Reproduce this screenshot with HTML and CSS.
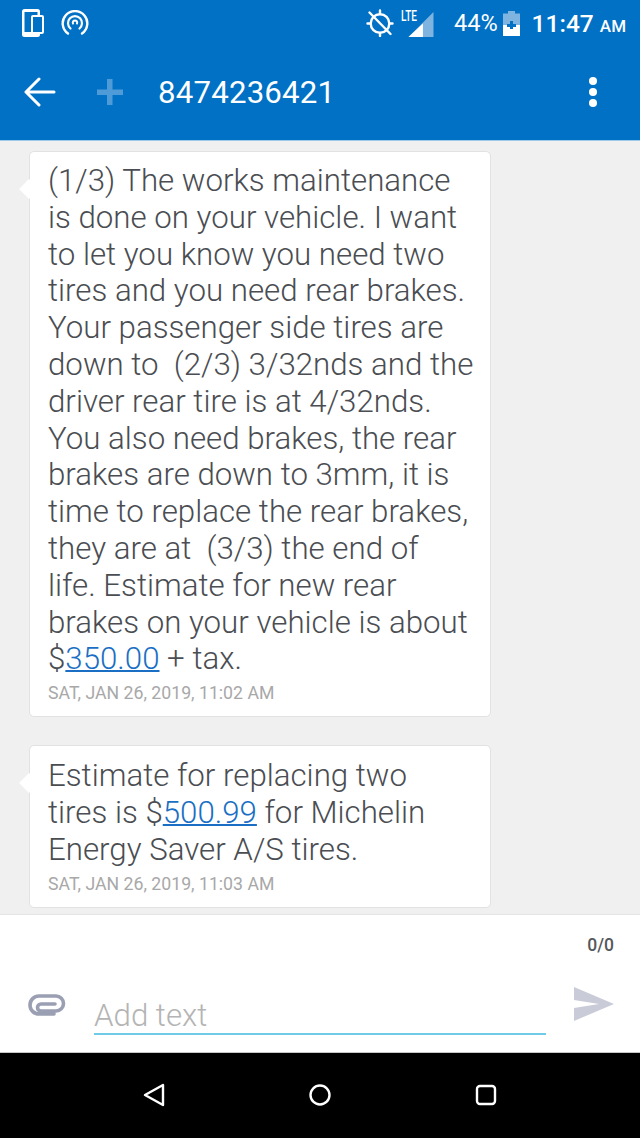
FILE: index.html
```html
<!DOCTYPE html>
<html lang="en">
<head>
<meta charset="utf-8">
<title>8474236421</title>
<link rel="stylesheet" href="styles.css">
</head>
<body>
<div class="app">
  <header class="appbar">
    <div class="status">
      <div class="status-left">
        <svg class="i-phone" viewBox="0 0 22 28" width="22" height="28"><rect x="0" y="0" width="18" height="28" rx="2.5" fill="#fff"/><rect x="2.5" y="3" width="13" height="20" fill="#0071c5"/><rect x="10" y="7" width="11" height="17" rx="1" fill="#0071c5" stroke="#fff" stroke-width="2"/></svg>
        <svg class="i-cast" viewBox="0 0 28 26" width="28" height="26" fill="none" stroke="#fff" stroke-linecap="round"><path d="M7 23.5A12.3 12.3 0 1 1 21 23.5" stroke-width="2.4"/><path d="M9.5 18.5A7 7 0 1 1 18.5 18.5" stroke-width="2.2"/><path d="M12 13.5A2.2 2.2 0 1 1 16 13.5" stroke-width="2"/></svg>
      </div>
      <div class="status-right">
        <svg class="i-alarm" viewBox="0 0 28 28" width="28" height="28" fill="none" stroke="#fff" stroke-width="2.4" stroke-linecap="round"><circle cx="14" cy="14.5" r="9.3"/><path d="M3.500 3.500L24.500 25M14 1.500v3M14 24.500v2.500M1.500 14.500h3M23.500 14.500h3"/></svg>
        <div class="signal">
          <span class="lte">LTE</span>
          <svg viewBox="0 0 26 26" width="26" height="25"><path d="M26 0V26H0Z" fill="#7fb3e0"/><path d="M15 12V26H0Z" fill="#fff"/></svg>
        </div>
        <span class="pct">44%</span>
        <svg class="i-batt" viewBox="0 0 17 25" width="17" height="25"><path d="M5 0h7v2.500h5V25H0V2.500h5Z" fill="#7fb3e0"/><path d="M0 14h17v11H0Z" fill="#fff"/><path d="M7 10h3v3h3v3h-3v2H7v-2H4v-3h3Z" fill="#0071c5"/></svg>
        <span class="clock">11:47 <small>AM</small></span>
      </div>
    </div>
    <div class="toolbar">
      <svg class="i-back" viewBox="0 0 32 30" width="32" height="30" fill="none" stroke="#fff" stroke-width="3" stroke-linecap="round" stroke-linejoin="round"><path d="M2 15H30M15 2L2 15L15 28"/></svg>
      <svg class="i-plus" viewBox="0 0 28 28" width="28" height="28" fill="#4e9bd8"><path d="M11 1h5.500v10.500H27V17H16.500v10H11V17H1v-5.500h10Z"/></svg>
      <span class="title">8474236421</span>
      <svg class="i-more" viewBox="0 0 10 32" width="10" height="32" fill="#fff"><circle cx="5" cy="5" r="4"/><circle cx="5" cy="16" r="4"/><circle cx="5" cy="27" r="4"/></svg>
    </div>
  </header>

  <main class="thread">
    <article class="bubble">
      <p class="msg">(1/3) The works maintenance<br>is done on your vehicle. I want<br>to let you know you need two<br>tires and you need rear brakes.<br>Your passenger side tires are<br>down to  (2/3) 3/32nds and the<br>driver rear tire is at 4/32nds.<br>You also need brakes, the rear<br>brakes are down to 3mm, it is<br>time to replace the rear brakes,<br>they are at  (3/3) the end of<br>life. Estimate for new rear<br>brakes on your vehicle is about<br>$<a class="link">350.00</a> + tax.</p>
      <p class="stamp">SAT, JAN 26, 2019, 11:02 AM</p>
    </article>
    <article class="bubble">
      <p class="msg">Estimate for replacing two<br>tires is $<a class="link">500.99</a> for Michelin<br>Energy Saver A/S tires.</p>
      <p class="stamp">SAT, JAN 26, 2019, 11:03 AM</p>
    </article>
  </main>

  <section class="composer">
    <div class="count">0/0</div>
    <div class="compose-row">
      <svg class="i-clip" viewBox="0 0 38 22" width="38" height="22" fill="none" stroke="#9a9fb3" stroke-width="3.600" stroke-linecap="round"><path d="M26 20H11A9 9 0 0 1 11 2H28A7.500 7.500 0 0 1 28 17H13A3.500 3.500 0 0 1 13 10H27"/></svg>
      <div class="field">Add text</div>
      <svg class="i-send" viewBox="0 0 40 34" width="40" height="34" fill="#c9ccd8"><path d="M0 0L40 17L0 34V21L25 17L0 13Z"/></svg>
    </div>
  </section>

  <nav class="navbar">
    <svg viewBox="0 0 22 24" width="22" height="24" fill="none" stroke="#fff" stroke-width="2.400" stroke-linejoin="round"><path d="M20 2V22L2 12Z"/></svg>
    <svg viewBox="0 0 24 24" width="24" height="24" fill="none" stroke="#fff" stroke-width="2.400"><circle cx="12" cy="12" r="9.500"/></svg>
    <svg viewBox="0 0 22 22" width="22" height="22" fill="none" stroke="#fff" stroke-width="2.400"><rect x="2" y="2" width="18" height="18" rx="3"/></svg>
  </nav>
</div>
</body>
</html>
```
FILE: styles.css
```css
* { box-sizing: border-box; }
html, body { margin: 0; padding: 0; }
body { font-family: Roboto, "Liberation Sans", sans-serif; background: #f0f0f0; }
.app { width: 640px; height: 1138px; display: flex; flex-direction: column; overflow: hidden; }

.appbar { height: 141px; flex: none; background: #0071c5; border-bottom: 1px solid #9ccbec; color: #fff; }
.status { height: 48px; display: flex; justify-content: space-between; align-items: center; padding: 0 14px 2px 22px; }
.status-left { display: flex; align-items: center; gap: 17px; }
.status-right { display: flex; align-items: center; }
.i-alarm { position: relative; left: -3px; }
.signal { display: flex; align-items: flex-end; position: relative; width: 28px; height: 27px; margin-left: 9px; justify-content: flex-end; }
.lte { position: absolute; left: -5px; top: -2px; font-size: 14px; font-weight: 500; transform: scaleX(.72); transform-origin: left top; }
.pct { font-size: 23.500px; margin-left: 20px; }
.i-batt { margin-left: 5px; }
.clock { font-size: 24.500px; font-weight: 500; margin-left: 12px; }
.clock small { font-size: 17px; font-weight: 500; }

.toolbar { height: 92px; display: flex; align-items: center; padding: 0 0 4px 24px; }
.i-plus { margin-left: 40px; }
.title { font-size: 31.200px; margin-left: 34px; letter-spacing: .2px; flex: 1; }
.i-more { margin-right: 42px; }

.thread { flex: 1; min-height: 0; overflow: hidden; padding: 10px 0 0 29px; display: flex; flex-direction: column; gap: 28px; }
.bubble { width: 462px; flex: none; background: #fff; border: 1px solid #e2e2e2; border-radius: 5px; padding: 11px 10px 12px 18px; position: relative; }
.bubble + .bubble { padding-top: 12px; }
.bubble::before { content: ""; position: absolute; left: -8px; top: 30px; width: 14px; height: 14px; background: #fff; transform: rotate(45deg); }
.msg { margin: 0; font-size: 31.250px; line-height: 36.800px; font-weight: 300; color: #4a4d52; white-space: pre-wrap; position: relative; }
.link { color: #1a6fc4; text-decoration: underline; text-decoration-thickness: 1.500px; }
.stamp { margin: 4px 0 0; font-size: 17.700px; line-height: 22px; color: #a8a8a8; }

.composer { height: 139px; flex: none; background: #fff; border-top: 1px solid #e4e4e4; border-bottom: 1px solid #c8c8c8; padding: 0 26px 0 28px; }
.count { text-align: right; font-size: 17.500px; font-weight: 500; color: #55585c; padding-top: 20px; height: 59px; }
.compose-row { display: flex; align-items: flex-start; }
.i-clip { margin-top: 20px; flex: none; }
.field { width: 452px; height: 50px; margin: 11px 0 0 28px; border-bottom: 2px solid #6fcbe8; font-size: 31.250px; line-height: 62px; font-weight: 300; color: #b4b4b4; }
.i-send { margin: 13px 0 0 28px; flex: none; }

.navbar { height: 85px; flex: none; background: #000; display: flex; align-items: center; justify-content: center; gap: 143px; padding: 0 0 2px 0; }
```
